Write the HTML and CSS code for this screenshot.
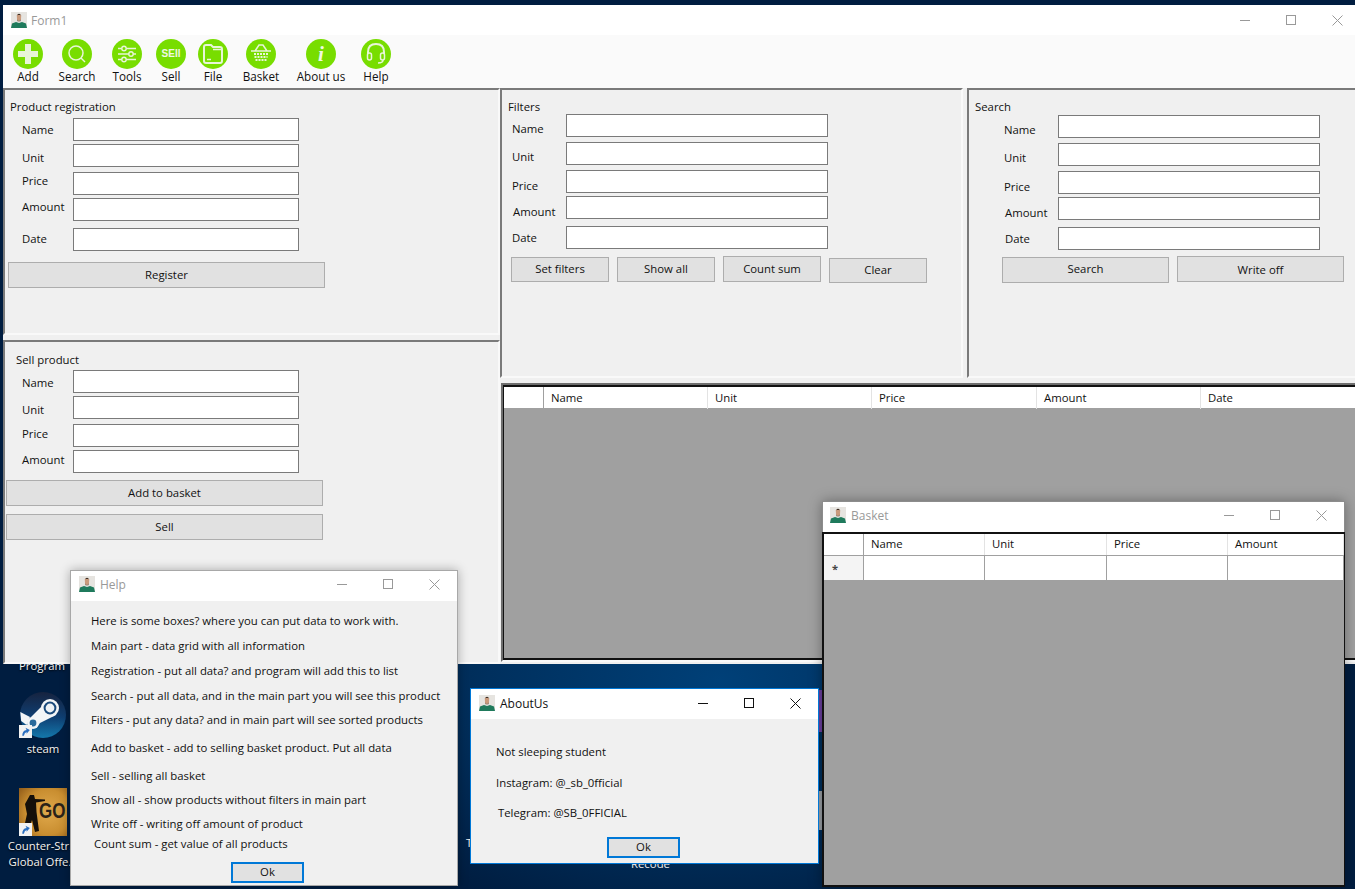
FILE: index.html
```html
<!DOCTYPE html>
<html lang="en">
<head>
  <meta charset="UTF-8">
  <title>Form1</title>
  <link rel="stylesheet" href="styles.css">
</head>
<body>

<svg class="defs" width="0" height="0">
  <symbol id="face" viewBox="0 0 16 16">
    <rect width="16" height="16" fill="#e6e4e0"/>
    <path d="M0 16 L1 11.5 L5 10 L8 11 L11 10 L15 11.5 L16 16 Z" fill="#1f7a5c"/>
    <path d="M5.8 3.5 Q8 1 10.2 3.5 L10 7.5 Q8 11 6 7.5 Z" fill="#c99a7c"/>
    <path d="M5.6 4 Q8 -0.5 10.4 4 L9.5 3 L6.5 3 Z" fill="#3a2a20"/>
    <path d="M6.2 7.5 Q8 10.5 9.8 7.5 L9.4 9.2 L6.6 9.2 Z" fill="#4a3428"/>
  </symbol>
  <symbol id="shortcut" viewBox="0 0 12 12">
    <rect width="12" height="12" fill="#f2f2f2"/>
    <path d="M3 10 Q3 5 7 4.5 L6 2.5 L10 4.5 L7 8 L7 6.5 Q5 7 4.5 10 Z" fill="#2b6fc0"/>
  </symbol>
</svg>

<div class="desktop">

  <div class="desk-icon program"><span>Program</span></div>

  <div class="desk-icon steam">
    <svg class="desk-pic" viewBox="0 0 46 46">
      <defs>
        <linearGradient id="steamfill" x1="0" y1="0" x2="0" y2="1">
          <stop offset="0" stop-color="#16233f"/>
          <stop offset="0.55" stop-color="#0f3f73"/>
          <stop offset="1" stop-color="#1478ab"/>
        </linearGradient>
      </defs>
      <circle cx="23" cy="23" r="23" fill="url(#steamfill)"/>
      <path d="M0.3 20 L10 25 L6.5 33 L1.2 29 Z" fill="#f3f5f7"/>
      <path d="M23 13 L36 23 L20 31 L17 35 L9 27 Z" fill="#f3f5f7"/>
      <circle cx="13" cy="31" r="6" fill="#f3f5f7"/>
      <circle cx="13" cy="31" r="3.4" fill="#2a6a9b"/>
      <circle cx="30" cy="16" r="9" fill="#f3f5f7"/>
      <circle cx="30" cy="16" r="6.4" fill="#1a4a7c"/>
      <circle cx="30" cy="16" r="4.4" fill="#eef2f6"/>
    </svg>
    <svg class="arrow-badge"><use href="#shortcut"/></svg>
    <span>steam</span>
  </div>

  <div class="desk-icon csgo">
    <div class="csgo-pic">
      <svg class="soldier" viewBox="0 0 24 40">
        <path d="M8 1 L12 1 L13 5 L23 5.5 L23 7 L14 8.5 L14.5 18 L17 37 L13 38 L10 26 L6 38 L1 38 L5 20 L3 10 Z" fill="#15100a"/>
      </svg>
      <span class="csgo-word">GO</span>
    </div>
    <svg class="arrow-badge"><use href="#shortcut"/></svg>
    <span class="desk-caption">Counter-Str.<br>Global Offe.</span>
  </div>

  <div class="peek peek-t">T</div>
  <div class="peek peek-recode">Recode</div>
  <div class="peek-strip"></div>

  <!-- main form -->
  <div class="win main-win">
    <div class="titlebar">
      <svg class="avatar"><use href="#face"/></svg>
      <span class="title-text">Form1</span>
      <div class="caption">
        <span class="cap-btn"><i class="cap-min"></i></span>
        <span class="cap-btn"><i class="cap-max"></i></span>
        <span class="cap-btn"><svg class="cap-close" viewBox="0 0 11 11"><path d="M0.5 0.5 L10.5 10.5 M10.5 0.5 L0.5 10.5"/></svg></span>
      </div>
    </div>

    <div class="toolbar">
      <div class="tool">
        <svg class="tool-icon" viewBox="0 0 30 30"><circle cx="15" cy="15" r="15" class="disc"/><path d="M15 5 V25 M5 15 H25" class="ink thick"/></svg>
        <span>Add</span>
      </div>
      <div class="tool">
        <svg class="tool-icon" viewBox="0 0 30 30"><circle cx="15" cy="15" r="15" class="disc"/><circle cx="14" cy="14" r="7" class="ink"/><path d="M19 19 L23 23" class="ink"/></svg>
        <span>Search</span>
      </div>
      <div class="tool">
        <svg class="tool-icon" viewBox="0 0 30 30"><circle cx="15" cy="15" r="15" class="disc"/><path d="M6 9.5 H24 M6 15 H24 M6 20.5 H24" class="ink"/><circle cx="12" cy="9.5" r="2.2" class="knob"/><circle cx="19" cy="15" r="2.2" class="knob"/><circle cx="12" cy="20.5" r="2.2" class="knob"/></svg>
        <span>Tools</span>
      </div>
      <div class="tool">
        <div class="sell-disc">SEll</div>
        <span>Sell</span>
      </div>
      <div class="tool">
        <svg class="tool-icon" viewBox="0 0 30 30"><circle cx="15" cy="15" r="15" class="disc"/><path d="M6 8 Q6 6 8 6 H13 L15 8 H22 Q24 8 24 10 V22 Q24 24 22 24 H8 Q6 24 6 22 Z" class="ink bold"/><path d="M15 10.5 H24" class="ink"/><path d="M9 20.5 H13" class="ink"/></svg>
        <span>File</span>
      </div>
      <div class="tool">
        <svg class="tool-icon" viewBox="0 0 30 30"><circle cx="15" cy="15" r="15" class="disc"/><path d="M9 12 L13 6 H17 L21 12 M5 12 H25" class="ink"/><path d="M8 15 H22 M8.5 18 H21.5 M9.5 21 H20.5" class="dots"/></svg>
        <span>Basket</span>
      </div>
      <div class="tool wide">
        <div class="info-disc">i</div>
        <span>About us</span>
      </div>
      <div class="tool">
        <svg class="tool-icon" viewBox="0 0 30 30"><circle cx="15" cy="15" r="15" class="disc"/><path d="M7 15 V13 Q7 5 15 5 Q23 5 23 13 V15" class="ink bold"/><rect x="6.5" y="14" width="4" height="7" rx="2" class="ink"/><rect x="19.5" y="14" width="4" height="7" rx="2" class="ink"/><path d="M22 21 Q22 24 17 24" class="ink"/></svg>
        <span>Help</span>
      </div>
    </div>

    <div class="form-body">
      <div class="left-col">
        <section class="panel reg-panel">
          <div class="panel-title">Product registration</div>
          <div class="fields reg-fields">
            <div class="row"><label class="drop4">Name</label><div class="box"></div></div>
            <div class="row gap3"><label class="drop6">Unit</label><div class="box"></div></div>
            <div class="row gap5"><label class="drop1">Price</label><div class="box"></div></div>
            <div class="row gap3"><label class="drop1">Amount</label><div class="box"></div></div>
            <div class="row gap7"><label class="drop3">Date</label><div class="box"></div></div>
          </div>
          <div class="btn reg-btn">Register</div>
        </section>

        <section class="panel sell-panel">
          <div class="panel-title">Sell product</div>
          <div class="fields sell-fields">
            <div class="row"><label class="drop5">Name</label><div class="box"></div></div>
            <div class="row gap3"><label class="drop6">Unit</label><div class="box"></div></div>
            <div class="row gap5"><label class="drop2">Price</label><div class="box"></div></div>
            <div class="row gap3"><label class="drop2">Amount</label><div class="box"></div></div>
          </div>
          <div class="btn sell-btn first">Add to basket</div>
          <div class="btn sell-btn">Sell</div>
        </section>
      </div>

      <div class="right-col">
        <div class="top-panels">
          <section class="panel filter-panel">
            <div class="panel-title">Filters</div>
            <div class="fields wide-fields">
              <div class="row"><label class="drop7">Name</label><div class="box"></div></div>
              <div class="row gap5"><label class="drop7">Unit</label><div class="box"></div></div>
              <div class="row gap5"><label class="drop8">Price</label><div class="box"></div></div>
              <div class="row gap3"><label class="drop8 nudge">Amount</label><div class="box"></div></div>
              <div class="row gap7"><label class="drop4">Date</label><div class="box"></div></div>
            </div>
            <div class="btn-row">
              <div class="btn small at2">Set filters</div>
              <div class="btn small at2">Show all</div>
              <div class="btn small tall at1">Count sum</div>
              <div class="btn small at3">Clear</div>
            </div>
          </section>

          <section class="panel search-panel">
            <div class="panel-title">Search</div>
            <div class="fields wide-fields">
              <div class="row"><label class="drop7">Name</label><div class="box"></div></div>
              <div class="row gap5"><label class="drop7">Unit</label><div class="box"></div></div>
              <div class="row gap5"><label class="drop8">Price</label><div class="box"></div></div>
              <div class="row gap3"><label class="drop8 nudge">Amount</label><div class="box"></div></div>
              <div class="row gap7"><label class="drop4 nudge">Date</label><div class="box"></div></div>
            </div>
            <div class="btn-row">
              <div class="btn large at1 lift">Search</div>
              <div class="btn large sink">Write off</div>
            </div>
          </section>
        </div>

        <div class="grid-frame">
          <div class="grid-inner">
            <div class="grid-head main-cols">
              <div class="corner"></div>
              <div class="col">Name</div>
              <div class="col">Unit</div>
              <div class="col">Price</div>
              <div class="col">Amount</div>
              <div class="col">Date</div>
            </div>
          </div>
        </div>
      </div>
    </div>
  </div>

  <!-- basket -->
  <div class="win basket-win">
    <div class="titlebar">
      <svg class="avatar"><use href="#face"/></svg>
      <span class="title-text">Basket</span>
      <div class="caption">
        <span class="cap-btn"><i class="cap-min"></i></span>
        <span class="cap-btn"><i class="cap-max"></i></span>
        <span class="cap-btn"><svg class="cap-close" viewBox="0 0 11 11"><path d="M0.5 0.5 L10.5 10.5 M10.5 0.5 L0.5 10.5"/></svg></span>
      </div>
    </div>
    <div class="basket-grid">
      <div class="grid-head basket-cols">
        <div class="corner"></div>
        <div class="col">Name</div>
        <div class="col">Unit</div>
        <div class="col">Price</div>
        <div class="col">Amount</div>
      </div>
      <div class="grid-row basket-cols">
        <div class="row-head">*</div>
        <div class="cell"></div>
        <div class="cell"></div>
        <div class="cell"></div>
        <div class="cell"></div>
      </div>
    </div>
  </div>

  <!-- help -->
  <div class="win help-win">
    <div class="titlebar">
      <svg class="avatar"><use href="#face"/></svg>
      <span class="title-text">Help</span>
      <div class="caption">
        <span class="cap-btn"><i class="cap-min"></i></span>
        <span class="cap-btn"><i class="cap-max"></i></span>
        <span class="cap-btn"><svg class="cap-close" viewBox="0 0 11 11"><path d="M0.5 0.5 L10.5 10.5 M10.5 0.5 L0.5 10.5"/></svg></span>
      </div>
    </div>
    <div class="help-body">
      <p>Here is some boxes? where you can put data to work with.</p>
      <p>Main part - data grid with all information</p>
      <p>Registration - put all data? and program will add this to list</p>
      <p>Search - put all data, and in the main part you will see this product</p>
      <p>Filters - put any data? and in main part will see sorted products</p>
      <p>Add to basket - add to selling basket product. Put all data</p>
      <p>Sell - selling all basket</p>
      <p>Show all - show products without filters in main part</p>
      <p>Write off - writing off amount of product</p>
      <p>Count sum - get value of all products</p>
      <div class="ok-btn">Ok</div>
    </div>
  </div>

  <!-- about -->
  <div class="win about-win">
    <div class="titlebar">
      <svg class="avatar"><use href="#face"/></svg>
      <span class="title-text">AboutUs</span>
      <div class="caption">
        <span class="cap-btn"><i class="cap-min"></i></span>
        <span class="cap-btn"><i class="cap-max"></i></span>
        <span class="cap-btn"><svg class="cap-close" viewBox="0 0 11 11"><path d="M0.5 0.5 L10.5 10.5 M10.5 0.5 L0.5 10.5"/></svg></span>
      </div>
    </div>
    <div class="about-body">
      <p>Not sleeping student</p>
      <p>Instagram: @_sb_0fficial</p>
      <p>Telegram: @SB_0FFICIAL</p>
      <div class="ok-btn">Ok</div>
    </div>
  </div>

</div>

</body>
</html>
```

FILE: styles.css
```css
body {
  margin: 0;
  font-family: "Open Sans", "Noto Sans", sans-serif;
  font-size: 11.35px;
  color: #111;
}

.defs {
  position: absolute;
}

.desktop {
  position: relative;
  width: 1355px;
  height: 889px;
  overflow: hidden;
  background: radial-gradient(ellipse 420px 260px at 720px 680px, #004078 0%, #00305e 55%, #001d40 100%) #001a38;
}

/* desktop icons */
.desk-icon {
  position: absolute;
  text-align: center;
  color: #f2f2f2;
  text-shadow: 0 1px 2px #000;
  line-height: 16px;
}

.program {
  left: 2px;
  top: 658px;
  width: 80px;
}

.steam {
  left: 3px;
  top: 692px;
  width: 80px;
}

.csgo {
  left: 3px;
  top: 788px;
  width: 80px;
}

.desk-pic {
  display: block;
  width: 46px;
  height: 46px;
  margin: 0 0 3px 17px;
}

.desk-caption {
  display: block;
  margin-left: -3px;
  width: 80px;
}

.csgo-pic {
  position: relative;
  width: 48px;
  height: 48px;
  margin: 0 0 2px 16px;
  background: radial-gradient(circle at 60% 50%, #e0a94c 0%, #c98e30 60%, #8f5a18 100%);
}

.soldier {
  position: absolute;
  left: 3px;
  top: 6px;
  width: 24px;
  height: 40px;
}

.csgo-word {
  position: absolute;
  left: 20px;
  top: 15px;
  font: bold 17px/18px "Liberation Sans", sans-serif;
  color: #2a2218;
  text-shadow: none;
  transform: scaleY(1.3);
}

.arrow-badge {
  position: absolute;
  left: 16px;
  top: 33px;
  width: 13px;
  height: 13px;
}

.csgo .arrow-badge {
  top: 35px;
}

.peek {
  position: absolute;
  color: #eee;
  line-height: 16px;
}

.peek-t {
  left: 466px;
  top: 835px;
}

.peek-recode {
  left: 631px;
  top: 856px;
}

.peek-strip {
  position: absolute;
  left: 819px;
  top: 690px;
  width: 3px;
  height: 140px;
  background: linear-gradient(#6a3fa0 0 30%, #00305e 30% 72%, #9aa0a6 72% 100%);
}

/* windows */
.win {
  position: absolute;
  box-sizing: border-box;
  background: #f0f0f0;
}

.main-win {
  left: 3px;
  top: 5px;
  width: 1357px;
  height: 659px;
}

.basket-win {
  left: 822px;
  top: 501px;
  width: 523px;
  height: 386px;
  border: 1px solid #8c8c8c;
  box-shadow: 0 0 12px rgba(0, 0, 0, 0.35);
  background: #a0a0a0;
}

.help-win {
  left: 70px;
  top: 570px;
  width: 388px;
  height: 316px;
  border: 1px solid #a8a8a8;
  box-shadow: 0 0 10px rgba(0, 0, 0, 0.3);
}

.about-win {
  left: 470px;
  top: 688px;
  width: 349px;
  height: 176px;
  border: 1px solid #0078d7;
}

.titlebar {
  box-sizing: border-box;
  display: flex;
  align-items: center;
  height: 30px;
  background: #fff;
  padding-left: 8px;
}

.basket-win .titlebar {
  padding: 0 0 4px 7px;
}

.help-win .titlebar {
  padding-bottom: 4px;
}

.about-win .titlebar {
  padding-bottom: 2px;
}

.avatar {
  width: 16px;
  height: 16px;
  flex: none;
}

.title-text {
  margin-left: 5px;
  font-size: 12px;
  color: #999;
}

.main-win .title-text {
  margin-left: 4px;
}

.about-win .title-text {
  color: #111;
}

.caption {
  display: flex;
  margin-left: auto;
}

.cap-btn {
  display: flex;
  align-items: center;
  justify-content: center;
  width: 46px;
  height: 26px;
}

.cap-min {
  display: block;
  width: 10px;
  height: 1px;
  background: #999;
}

.cap-max {
  display: block;
  box-sizing: border-box;
  width: 10px;
  height: 10px;
  border: 1px solid #999;
}

.cap-close {
  width: 11px;
  height: 11px;
  fill: none;
  stroke: #999;
  stroke-width: 1;
}

.about-win .cap-min,
.about-win .cap-max {
  background: #111;
  border-color: #111;
}

.about-win .cap-max {
  background: none;
}

.about-win .cap-close {
  stroke: #111;
}

/* toolbar */
.toolbar {
  display: grid;
  grid-template-columns: 50px 48px 52px 36px 48px 48px 72px 38px;
  height: 53px;
  background: #fafafa;
}

.tool {
  display: flex;
  flex-direction: column;
  align-items: center;
  padding-top: 4px;
  font-size: 11.7px;
  line-height: 16px;
}

.tool span {
  margin-top: -1px;
}

.tool-icon,
.sell-disc,
.info-disc {
  width: 30px;
  height: 30px;
  flex: none;
}

.disc {
  fill: #78dd00;
}

.ink {
  fill: none;
  stroke: #e8f5d8;
  stroke-width: 1.5;
}

.bold {
  stroke-width: 2;
}

.thick {
  stroke-width: 6;
}

.knob {
  fill: #78dd00;
  stroke: #e8f5d8;
  stroke-width: 1.4;
}

.dots {
  fill: none;
  stroke: #e8f5d8;
  stroke-width: 2;
  stroke-dasharray: 2 1;
}

.sell-disc,
.info-disc {
  border-radius: 50%;
  background: #78dd00;
  color: #f0f8e4;
  text-align: center;
}

.sell-disc {
  font: bold 10px/30px "Liberation Sans", sans-serif;
}

.info-disc {
  font: italic bold 21px/30px "Liberation Serif", serif;
}

/* form layout */
.form-body {
  display: flex;
}

.left-col {
  width: 497px;
  flex: none;
}

.right-col {
  flex: 1;
}

.panel {
  box-sizing: border-box;
  border: 2px solid;
  border-color: #7a7a7a #f9f9f9 #f9f9f9 #7a7a7a;
  background: #f0f0f0;
}

.panel-title {
  line-height: 16px;
}

.reg-panel {
  height: 247px;
  padding: 9px 0 0 5px;
}

.sell-panel {
  height: 324px;
  margin-top: 5px;
  padding: 10px 0 0 11px;
}

.top-panels {
  display: flex;
  gap: 4px;
}

.filter-panel,
.search-panel {
  height: 290px;
  padding-top: 9px;
}

.filter-panel {
  width: 463px;
  padding-left: 6px;
}

.search-panel {
  width: 392px;
  padding-left: 6px;
}

.fields {
  display: flex;
  flex-direction: column;
}

.reg-fields {
  margin: 3px 0 0 12px;
}

.sell-fields {
  margin: 2px 0 0 6px;
}

.wide-fields {
  margin: -1px 0 0 4px;
}

.search-panel .wide-fields {
  margin: 0 0 0 29px;
}

.row {
  display: flex;
  height: 23px;
}

.row label {
  width: 51px;
  flex: none;
  line-height: 16px;
}

.wide-fields label {
  width: 54px;
}

.gap3 { margin-top: 3px; }
.gap5 { margin-top: 5px; }
.gap7 { margin-top: 7px; }

.drop1 { margin-top: 1px; }
.drop2 { margin-top: 2px; }
.drop3 { margin-top: 3px; }
.drop4 { margin-top: 4px; }
.drop5 { margin-top: 5px; }
.drop6 { margin-top: 6px; }
.drop7 { margin-top: 7px; }
.drop8 { margin-top: 8px; }

.row label.nudge {
  margin-left: 1px;
  width: 53px;
}

.box {
  box-sizing: border-box;
  width: 226px;
  height: 23px;
  background: #fff;
  border: 1px solid #7a7a7a;
}

.wide-fields .box {
  width: 262px;
}

.btn {
  box-sizing: border-box;
  display: flex;
  align-items: center;
  justify-content: center;
  padding-bottom: 1px;
  background: #e1e1e1;
  border: 1px solid #adadad;
}

.reg-btn {
  width: 317px;
  height: 26px;
  margin: 11px 0 0 -2px;
}

.sell-btn {
  width: 317px;
  height: 26px;
  margin: 8px 0 0 -10px;
}

.sell-btn.first {
  margin-top: 7px;
}

.btn-row {
  display: flex;
  gap: 8px;
  align-items: flex-start;
  margin: 6px 0 0 3px;
}

.search-panel .btn-row {
  margin-left: 27px;
}

.btn.small {
  width: 98px;
  height: 25px;
  padding-bottom: 3px;
}

.btn.small.tall {
  height: 26px;
  padding-bottom: 1px;
}

.btn.large {
  width: 167px;
  height: 26px;
}

.btn.large.lift {
  padding-bottom: 3px;
}

.btn.large.sink {
  padding-bottom: 0;
}

.at1 { margin-top: 1px; }
.at2 { margin-top: 2px; }
.at3 { margin-top: 3px; }

/* data grids */
.grid-frame {
  box-sizing: border-box;
  height: 279px;
  margin: 5px 0 0 1px;
  border: 2px solid;
  border-color: #6e6e6e #f9f9f9 #f9f9f9 #6e6e6e;
}

.grid-inner {
  height: 100%;
  box-sizing: border-box;
  border: 2px solid #111;
  border-width: 2px 0 2px 1px;
  background: #a0a0a0;
}

.grid-head {
  display: grid;
  height: 21px;
  background: #fff;
  line-height: 20px;
}

.main-cols {
  grid-template-columns: 40px 164px 164px 165px 164px 1fr;
  line-height: 22px;
}

.basket-cols {
  grid-template-columns: 40px 121px 122px 121px 116px;
}

.corner {
  border-right: 1px solid #a0a0a0;
}

.col {
  padding-left: 7px;
  border-right: 1px solid #e3e3e3;
}

.basket-grid {
  height: 355px;
  margin: 0 -1px;
  box-sizing: border-box;
  background: #a0a0a0;
  border: 2px solid #111;
  border-width: 2px 1px 2px 2px;
}

.basket-grid .grid-head {
  width: 520px;
  border-bottom: 1px solid #a0a0a0;
}

.grid-row {
  display: grid;
  width: 520px;
  height: 24px;
  background: #fff;
}

.row-head {
  padding: 5px 0 0 8px;
  background: #f4f4f4;
  font-weight: bold;
  font-size: 11px;
  color: #444;
  border-right: 1px solid #a0a0a0;
}

.cell {
  border-right: 1px solid #a0a0a0;
}

/* dialogs */
.help-body {
  padding: 12px 0 0 20px;
}

.help-body p,
.about-body p {
  margin: 0;
  line-height: 16px;
}

.help-body p:nth-child(n+2) { margin-top: 9px; }
.help-body p:nth-child(5) { margin-top: 8px; }
.help-body p:nth-child(6) { margin-top: 12px; }
.help-body p:nth-child(7) { margin-top: 12px; }
.help-body p:nth-child(8) { margin-top: 8px; }
.help-body p:nth-child(9) { margin-top: 8px; }
.help-body p:nth-child(10) { margin: 4px 0 0 3px; }

.ok-btn {
  box-sizing: border-box;
  width: 73px;
  height: 21px;
  border: 2px solid #0078d7;
  background: #e1e1e1;
  text-align: center;
  line-height: 16px;
}

.help-body .ok-btn {
  margin: 10px 0 0 140px;
}

.about-body {
  padding: 25px 0 0 25px;
}

.about-body p:nth-child(2) { margin-top: 15px; }
.about-body p:nth-child(3) { margin: 14px 0 0 2px; }

.about-body .ok-btn {
  margin: 16px 0 0 111px;
}
```
